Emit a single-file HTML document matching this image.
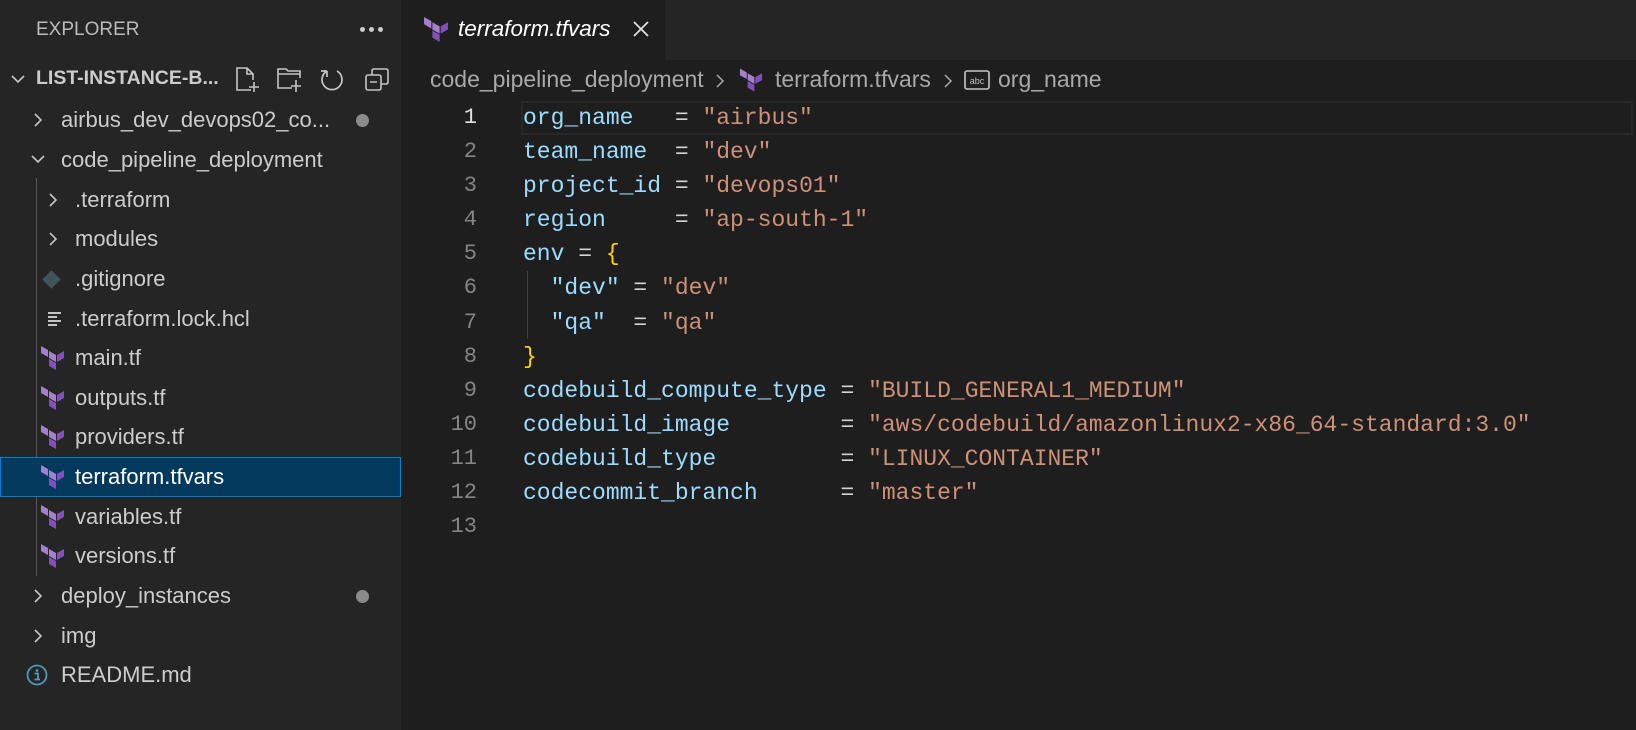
<!DOCTYPE html>
<html><head><meta charset="utf-8"><style>
*{margin:0;padding:0;box-sizing:border-box}
body{width:1636px;height:730px;background:#1e1e1e;overflow:hidden;position:relative;font-family:"Liberation Sans",sans-serif;color:#cccccc}
.side{position:absolute;left:0;top:0;width:401px;height:730px;background:#252526}
.abs{position:absolute}
.row{position:absolute;left:0;width:401px;height:40px;line-height:40px;font-size:22px;color:#cccccc;white-space:nowrap}
.row svg{position:absolute}
.sel{background:#04395e;border:1px solid #007fd4}
.tabbar{position:absolute;left:401px;top:0;width:1235px;height:60px;background:#252526}
.tab{position:absolute;left:401px;top:0;width:264px;height:60px;background:#1e1e1e}
.code{position:absolute;left:523px;top:101px;font-family:"Liberation Mono",monospace;font-size:23px;line-height:34.1px;white-space:pre;color:#d4d4d4}
.ln{position:absolute;left:400px;width:77px;top:101px;font-family:"Liberation Mono",monospace;font-size:22px;line-height:34.1px;text-align:right;color:#858585}
.k{color:#9cdcfe}.s{color:#ce9178}.b{color:#ffd700}
.bc{position:absolute;top:66px;font-size:23px;color:#a9a9a9;white-space:nowrap}
</style></head><body>
<svg width="0" height="0" style="position:absolute"><defs>
<g id="tf"><polygon points="1,1 8,5 8,12 1,8" fill="#a57fd0"/><polygon points="9,6 16,10 16,17 9,13" fill="#a57fd0"/><polygon points="9,14 16,18 16,25 9,21" fill="#844fba"/><polygon points="17,10 24,6 24,13 17,17" fill="#844fba"/></g>
<path id="chr" d="M3 2 L9 8 L3 14" fill="none" stroke="#c5c5c5" stroke-width="1.6"/>
<path id="chd" d="M2 4 L8 10 L14 4" fill="none" stroke="#c5c5c5" stroke-width="1.6"/>
</defs></svg>

<div class="side">
  <div class="abs" style="left:36px;top:19px;font-size:19px;color:#bbbbbb">EXPLORER</div>
  <div class="abs" style="left:360px;top:27px;width:5px;height:5px;border-radius:50%;background:#ccc"></div>
  <div class="abs" style="left:369px;top:27px;width:5px;height:5px;border-radius:50%;background:#ccc"></div>
  <div class="abs" style="left:378px;top:27px;width:5px;height:5px;border-radius:50%;background:#ccc"></div>
  <svg class="abs" style="left:10px;top:72px" width="16" height="16"><use href="#chd"/></svg>
  <div class="abs" style="left:36px;top:67px;font-size:19.5px;font-weight:bold;color:#cccccc">LIST-INSTANCE-B...</div>
  <svg class="abs" style="left:235px;top:66px" width="26" height="28" viewBox="0 0 26 28" fill="none" stroke="#c5c5c5" stroke-width="1.6"><path d="M16 24 H2 V2 H12 L18 8 V14 M12 2 V8 H18 M19 16 V26 M14 21 H24"/></svg>
  <svg class="abs" style="left:276px;top:66px" width="28" height="28" viewBox="0 0 28 28" fill="none" stroke="#c5c5c5" stroke-width="1.6"><path d="M16 22 H2 V3 H10 L12 5 H24 V12 M2 8 H24 M20 14 V26 M15 20 H25"/></svg>
  <svg class="abs" style="left:319px;top:66px" width="26" height="26" viewBox="0 0 26 26" fill="none" stroke="#c5c5c5" stroke-width="1.7"><path d="M8 5 A10 10 0 1 0 18 5 M8 5 V11 M8 5 H2"/></svg>
  <svg class="abs" style="left:364px;top:67px" width="26" height="26" viewBox="0 0 26 26" fill="none" stroke="#c5c5c5" stroke-width="1.6"><rect x="2" y="8" width="15" height="15" rx="2"/><path d="M8 8 V4 Q8 2 10 2 H22 Q24 2 24 4 V15 Q24 17 22 17 H17 M6 15 H13"/></svg>

  <div class="abs" style="left:36px;top:178px;width:1px;height:398px;background:#585858"></div>

  <div class="row" style="top:100px"><svg style="left:32px;top:12px" width="12" height="16"><use href="#chr"/></svg><span style="position:absolute;left:61px">airbus_dev_devops02_co...</span><span style="position:absolute;left:356px;top:14px;width:13px;height:13px;border-radius:50%;background:#8b8b8b"></span></div>
  <div class="row" style="top:140px"><svg style="left:30px;top:12px" width="16" height="16"><use href="#chd"/></svg><span style="position:absolute;left:61px">code_pipeline_deployment</span></div>
  <div class="row" style="top:180px"><svg style="left:47px;top:12px" width="12" height="16"><use href="#chr"/></svg><span style="position:absolute;left:75px">.terraform</span></div>
  <div class="row" style="top:219px"><svg style="left:47px;top:12px" width="12" height="16"><use href="#chr"/></svg><span style="position:absolute;left:75px">modules</span></div>
  <div class="row" style="top:259px"><svg style="left:41px;top:10px" width="22" height="22" viewBox="0 0 22 22"><rect x="4" y="4" width="13" height="13" transform="rotate(45 10.5 10.5)" fill="#41535b"/></svg><span style="position:absolute;left:75px">.gitignore</span></div>
  <div class="row" style="top:299px"><svg style="left:47px;top:11px" width="18" height="18" viewBox="0 0 18 18" stroke="#c5c5c5" stroke-width="2"><path d="M1 3H14M1 7H10M1 11H14M1 15H10"/></svg><span style="position:absolute;left:75px">.terraform.lock.hcl</span></div>
  <div class="row" style="top:338px"><svg style="left:40px;top:7px" width="25" height="27" viewBox="0 0 25 27"><use href="#tf"/></svg><span style="position:absolute;left:75px">main.tf</span></div>
  <div class="row" style="top:378px"><svg style="left:40px;top:7px" width="25" height="27" viewBox="0 0 25 27"><use href="#tf"/></svg><span style="position:absolute;left:75px">outputs.tf</span></div>
  <div class="row" style="top:417px"><svg style="left:40px;top:7px" width="25" height="27" viewBox="0 0 25 27"><use href="#tf"/></svg><span style="position:absolute;left:75px">providers.tf</span></div>
  <div class="row sel" style="top:457px"><svg style="left:39px;top:6px" width="25" height="27" viewBox="0 0 25 27"><use href="#tf"/></svg><span style="position:absolute;left:74px;top:-1px;color:#fff">terraform.tfvars</span></div>
  <div class="row" style="top:497px"><svg style="left:40px;top:7px" width="25" height="27" viewBox="0 0 25 27"><use href="#tf"/></svg><span style="position:absolute;left:75px">variables.tf</span></div>
  <div class="row" style="top:536px"><svg style="left:40px;top:7px" width="25" height="27" viewBox="0 0 25 27"><use href="#tf"/></svg><span style="position:absolute;left:75px">versions.tf</span></div>
  <div class="row" style="top:576px"><svg style="left:32px;top:12px" width="12" height="16"><use href="#chr"/></svg><span style="position:absolute;left:61px">deploy_instances</span><span style="position:absolute;left:356px;top:14px;width:13px;height:13px;border-radius:50%;background:#8b8b8b"></span></div>
  <div class="row" style="top:616px"><svg style="left:32px;top:12px" width="12" height="16"><use href="#chr"/></svg><span style="position:absolute;left:61px">img</span></div>
  <div class="row" style="top:655px"><svg style="left:26px;top:9px" width="22" height="22" viewBox="0 0 22 22"><circle cx="11" cy="11" r="9.5" fill="none" stroke="#519aba" stroke-width="1.8"/><circle cx="11" cy="6.5" r="1.4" fill="#519aba"/><path d="M8.5 9.5H12V15.5M8.5 15.5H14" stroke="#519aba" stroke-width="1.8" fill="none"/></svg><span style="position:absolute;left:61px">README.md</span></div>
</div>

<div class="tabbar"></div>
<div class="tab">
  <svg class="abs" style="left:22px;top:16px" width="26" height="28" viewBox="0 0 25 27"><use href="#tf"/></svg>
  <div class="abs" style="left:57px;top:16px;font-size:22.5px;font-style:italic;color:#ffffff">terraform.tfvars</div>
  <svg class="abs" style="left:231px;top:20px" width="18" height="18" viewBox="0 0 18 18" stroke="#e0e0e0" stroke-width="1.8"><path d="M2 2L16 16M16 2L2 16"/></svg>
</div>

<div class="bc" style="left:430px">code_pipeline_deployment</div>
<svg class="abs" style="left:714px;top:72px" width="12" height="18"><path d="M3 3L9 9L3 15" fill="none" stroke="#a9a9a9" stroke-width="1.5"/></svg>
<svg class="abs" style="left:739px;top:67px" width="24" height="27" viewBox="0 0 25 27"><use href="#tf"/></svg>
<div class="bc" style="left:775px">terraform.tfvars</div>
<svg class="abs" style="left:942px;top:72px" width="12" height="18"><path d="M3 3L9 9L3 15" fill="none" stroke="#a9a9a9" stroke-width="1.5"/></svg>
<svg class="abs" style="left:964px;top:70px" width="26" height="20" viewBox="0 0 26 20"><rect x="1" y="1" width="24" height="18" rx="2" fill="none" stroke="#c5c5c5" stroke-width="1.6"/><text x="13" y="14" font-size="9" fill="#c5c5c5" text-anchor="middle" font-family="Liberation Sans">abc</text></svg>
<div class="bc" style="left:998px">org_name</div>

<div class="abs" style="left:521px;top:101px;width:1112px;height:34px;border:2px solid #282828"></div>
<div class="abs" style="left:527px;top:271px;width:1px;height:68px;background:#404040"></div>

<div class="ln"><span style="color:#e0e0e0">1</span><br>2<br>3<br>4<br>5<br>6<br>7<br>8<br>9<br>10<br>11<br>12<br>13</div>

<div class="code"><span class="k">org_name</span>   = <span class="s">"airbus"</span>
<span class="k">team_name</span>  = <span class="s">"dev"</span>
<span class="k">project_id</span> = <span class="s">"devops01"</span>
<span class="k">region</span>     = <span class="s">"ap-south-1"</span>
<span class="k">env</span> = <span class="b">{</span>
  <span class="k">"dev"</span> = <span class="s">"dev"</span>
  <span class="k">"qa"</span>  = <span class="s">"qa"</span>
<span class="b">}</span>
<span class="k">codebuild_compute_type</span> = <span class="s">"BUILD_GENERAL1_MEDIUM"</span>
<span class="k">codebuild_image</span>        = <span class="s">"aws/codebuild/amazonlinux2-x86_64-standard:3.0"</span>
<span class="k">codebuild_type</span>         = <span class="s">"LINUX_CONTAINER"</span>
<span class="k">codecommit_branch</span>      = <span class="s">"master"</span>
</div>
</body></html>
